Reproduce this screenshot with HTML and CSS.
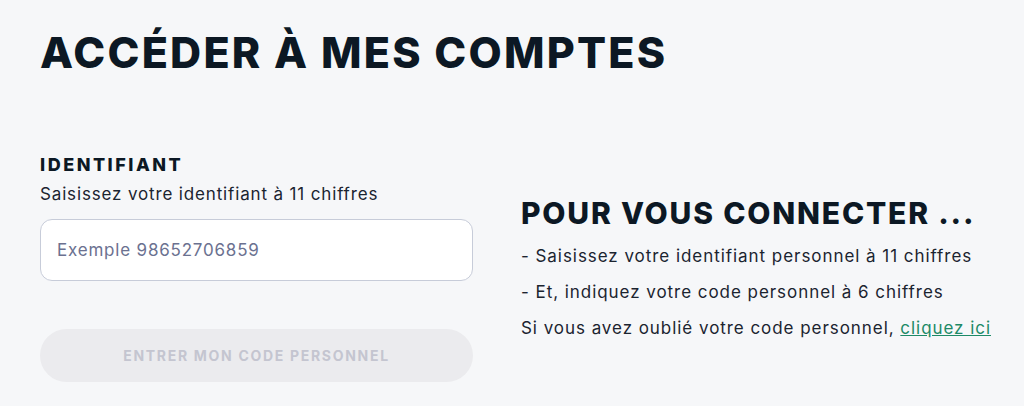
FILE: index.html
```html
<!DOCTYPE html>
<html lang="fr">
<head>
    <meta charset="UTF-8">
    <meta name="viewport" content="width=device-width, initial-scale=1.0">
    <title>Accéder à mes comptes</title>
    <link rel="stylesheet" href="styles.css">
</head>
<body>

<main class="page">
    <h1 class="title">ACCÉDER À MES COMPTES</h1>

    <div class="content">
        <form class="login" id="loginForm">
            <label class="login-label" for="ident">IDENTIFIANT</label>
            <p class="login-hint">Saisissez votre identifiant à 11 chiffres</p>
            <input class="login-input" type="text" id="ident" placeholder="Exemple 98652706859">
            <button class="login-button" type="submit" disabled>ENTRER MON CODE PERSONNEL</button>
        </form>

        <aside class="help">
            <h2 class="help-title">POUR VOUS CONNECTER ...</h2>
            <p>- Saisissez votre identifiant personnel à 11 chiffres</p>
            <p>- Et, indiquez votre code personnel à 6 chiffres</p>
            <p>Si vous avez oublié votre code personnel, <a href="#">cliquez ici</a></p>
        </aside>
    </div>
</main>

</body>
</html>
```

FILE: styles.css
```css
body {
    font-family: 'Inter', 'Noto Sans', sans-serif;
    margin: 0;
    background-color: #f6f7f9;
    color: #1b2430;
}

.page {
    padding: 24px 16px 0 40px;
}

.title {
    margin: 0;
    font-size: 43px;
    font-weight: 800;
    line-height: 56px;
    letter-spacing: 2.2px;
    color: #0c1824;
}

.content {
    display: flex;
    align-items: flex-start;
    gap: 48px;
    margin-top: 74px;
}

.login {
    flex: none;
    width: 433px;
    display: flex;
    flex-direction: column;
}

.login-label {
    font-size: 18px;
    font-weight: 800;
    color: #0c1824;
    line-height: 22px;
    letter-spacing: 2.5px;
}

.login-hint {
    margin: 8px 0 15px;
    font-size: 17px;
    line-height: 20px;
    letter-spacing: 0.85px;
}

.login-input {
    height: 62px;
    box-sizing: border-box;
    padding: 0 16px;
    font-family: inherit;
    font-size: 17px;
    letter-spacing: 0.8px;
    color: #1b2430;
    background-color: #fff;
    border: 1px solid #c7ccd9;
    border-radius: 12px;
    outline: none;
}

.login-input::placeholder {
    color: #6b7190;
}

.login-button {
    margin-top: 48px;
    height: 53px;
    font-family: inherit;
    font-size: 14px;
    font-weight: 700;
    letter-spacing: 1.7px;
    color: #c4c5d0;
    background-color: #ebebee;
    border: none;
    border-radius: 27px;
}

.help {
    flex: none;
    margin-top: 41px;
    white-space: nowrap;
}

.help p {
    margin: 0 0 15px;
    font-size: 17px;
    line-height: 21px;
    letter-spacing: 0.95px;
}

.help-title {
    margin: 0 0 15px;
    font-size: 30px;
    font-weight: 800;
    line-height: 36px;
    letter-spacing: 1.8px;
    color: #0c1824;
}

.help a {
    color: #1d8a67;
}
```
